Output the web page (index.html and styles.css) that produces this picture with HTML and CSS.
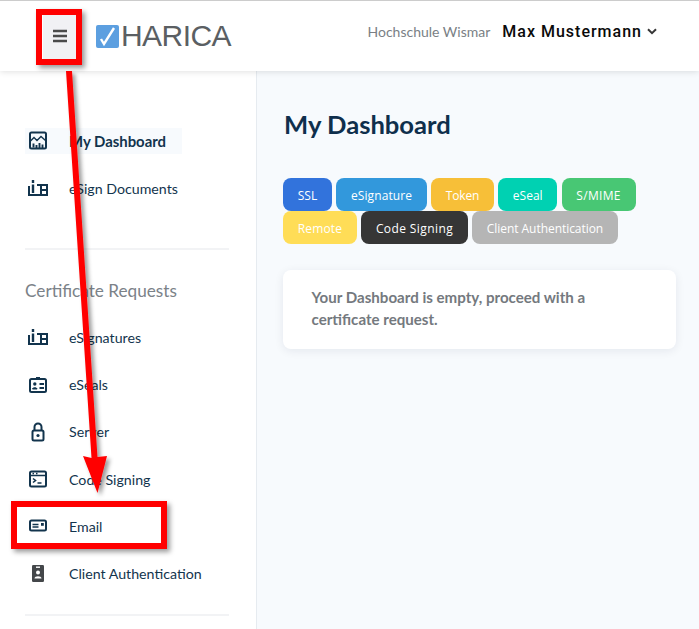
FILE: index.html
```html
<!DOCTYPE html>
<html lang="en">
<head>
<meta charset="utf-8">
<title>HARICA</title>
<link rel="stylesheet" href="styles.css">
</head>
<body>
<header class="topbar">
  <div class="brand">
    <button class="burger" aria-label="Menu">
      <svg width="16" height="14" viewBox="0 0 16 14"><path d="M1 2h14M1 7h14M1 12h14" stroke="#4a4a4a" stroke-width="2.4" fill="none"/></svg>
    </button>
    <div class="logo">
      <svg class="logo-mark" width="23" height="23" viewBox="0 0 23 23"><rect width="23" height="23" rx="2" fill="#5c9fe0"/><path d="M5 14l3 5L18 3" stroke="#fff" stroke-width="2.4" fill="none"/></svg>
      <span class="logo-text">HARICA</span>
    </div>
  </div>
  <div class="account">
    <span class="org">Hochschule Wismar</span>
    <span class="user">Max Mustermann</span>
    <svg width="10" height="7" viewBox="0 0 10 7"><path d="M1 1.200l4 4 4-4" stroke="#363636" stroke-width="2" fill="none"/></svg>
  </div>
</header>
<div class="layout">
  <aside class="sidebar">
    <nav class="group first">
      <a class="item active">
        <svg class="ico" viewBox="0 0 20 20"><rect x="2" y="1.500" width="16" height="16" rx="1.500" fill="none" stroke="#12344d" stroke-width="2"/><path d="M2.500 10l3.500-3.500 3 3 4-4 4.500 4" fill="none" stroke="#12344d" stroke-width="1.400"/><path d="M5.500 12.500v4M8.500 14v3M11.500 12v5M14.500 13.500v3.500" stroke="#12344d" stroke-width="1.900"/></svg>
        <span>My Dashboard</span>
      </a>
      <a class="item">
        <svg class="ico" viewBox="0 0 20 20"><path d="M1 8v9h18V7H9" fill="none" stroke="#12344d" stroke-width="2"/><path d="M5 2v3M5 6.500V15" stroke="#12344d" stroke-width="2.400"/><path d="M13 7v10M13 12h6" stroke="#12344d" stroke-width="2"/></svg>
        <span>eSign Documents</span>
      </a>
    </nav>
    <hr class="rule">
    <nav class="group">
      <h2 class="heading">Certificate Requests</h2>
      <a class="item">
        <svg class="ico" viewBox="0 0 20 20"><path d="M1 8v9h18V7H9" fill="none" stroke="#12344d" stroke-width="2"/><path d="M5 2v3M5 6.500V15" stroke="#12344d" stroke-width="2.400"/><path d="M13 7v10M13 12h6" stroke="#12344d" stroke-width="2"/></svg>
        <span>eSignatures</span>
      </a>
      <a class="item">
        <svg class="ico" viewBox="0 0 20 20"><rect x="2" y="4" width="16" height="13" rx="1.500" fill="none" stroke="#12344d" stroke-width="2"/><path d="M8 3.500h4" stroke="#12344d" stroke-width="3"/><circle cx="6.800" cy="9" r="1.700" fill="#12344d"/><path d="M4.500 14c0-1.700 4.600-1.700 4.600 0z" fill="#12344d" stroke="#12344d"/><path d="M11.500 9h4.500M11.500 13h4.500" stroke="#12344d" stroke-width="1.800"/></svg>
        <span>eSeals</span>
      </a>
      <a class="item">
        <svg class="ico" viewBox="0 0 20 20"><rect x="4.500" y="8.500" width="11" height="10" rx="1.500" fill="none" stroke="#12344d" stroke-width="2"/><path d="M6.500 8V5a3.500 3.500 0 0 1 7 0v3" fill="none" stroke="#12344d" stroke-width="2"/><circle cx="10" cy="13.500" r="1.600" fill="#12344d"/></svg>
        <span>Server</span>
      </a>
      <a class="item">
        <svg class="ico" viewBox="0 0 20 20"><rect x="2" y="2.500" width="16" height="15" rx="1.500" fill="none" stroke="#12344d" stroke-width="2"/><path d="M2 6.500h16M4.500 4.400h1.500M8 4.400h1.500" stroke="#12344d" stroke-width="1.500"/><path d="M5 9.500l2.500 2-2.500 2M9.500 14h4" fill="none" stroke="#12344d" stroke-width="1.600"/></svg>
        <span>Code Signing</span>
      </a>
      <a class="item">
        <svg class="ico" viewBox="0 0 20 20"><rect x="2" y="4.500" width="16" height="10" rx="1.500" fill="none" stroke="#12344d" stroke-width="2"/><path d="M4.500 8.500h6M4.500 11h6" stroke="#12344d" stroke-width="1.400"/><rect x="13" y="7" width="2.800" height="2.800" fill="#12344d"/></svg>
        <span>Email</span>
      </a>
      <a class="item">
        <svg class="ico" viewBox="0 0 20 20"><rect x="4" y="1" width="12" height="17" rx="1.200" fill="#44474a"/><rect x="8" y="2.500" width="4" height="1.400" fill="#fff"/><circle cx="10" cy="8.500" r="2" fill="#fff"/><path d="M6.500 14.500c0-3 7-3 7 0z" fill="#fff"/></svg>
        <span>Client Authentication</span>
      </a>
    </nav>
    <hr class="rule">
  </aside>
  <main class="content">
    <h1 class="title">My Dashboard</h1>
    <div class="tags">
      <span class="tag ssl">SSL</span>
      <span class="tag esig">eSignature</span>
      <span class="tag token">Token</span>
      <span class="tag eseal">eSeal</span>
      <span class="tag smime">S/MIME</span>
      <span class="tag remote">Remote</span>
      <span class="tag code">Code Signing</span>
      <span class="tag client">Client Authentication</span>
    </div>
    <section class="card">Your Dashboard is empty, proceed with a certificate request.</section>
  </main>
</div>
<div class="mark mark-burger"></div>
<div class="mark mark-email"></div>
<svg class="arrow" width="699" height="629" viewBox="0 0 699 629">
  <defs><filter id="s" x="-20%" y="-20%" width="140%" height="140%"><feDropShadow dx="3" dy="3" stdDeviation="2" flood-color="#000" flood-opacity=".4"/></filter></defs>
  <path d="M66 71L91.500 458L83 456L97.500 493L107 456L97.500 457L72 71z" fill="#f00" filter="url(#s)"/>
</svg>
</body>
</html>
```
FILE: styles.css
```css
* { box-sizing: border-box; }
html, body { margin: 0; height: 100%; overflow: hidden; }
body { font-family: "Lato", sans-serif; background: #f7fafd; color: #12344d; border-top: 1px solid #ccc; height: 629px; position: relative; }
.topbar { height: 70px; background: #fff; display: flex; align-items: center; justify-content: space-between; box-shadow: 0 1px 6px rgba(0,0,0,.12); position: relative; padding: 0 42px 0 43px; }
.brand { display: flex; align-items: center; gap: 20px; }
.burger { width: 33px; height: 48px; background: #f1f1f4; border: 0; padding: 0; display: flex; align-items: center; justify-content: center; }
.logo { display: flex; align-items: center; gap: 2px; }
.logo-mark { display: block; }
.logo-text { font-family: "Liberation Sans", sans-serif; font-size: 30px; letter-spacing: -.55px; color: #5b5f63; line-height: 1; }
.account { display: flex; align-items: center; margin-bottom: 9px; }
.org { font-size: 14px; color: #7a7f85; margin-right: 12px; }
.user { font-family: "Roboto", sans-serif; font-size: 16px; font-weight: 500; color: #0a0a0a; letter-spacing: 1px; margin-right: 5px; }
.layout { display: flex; height: 558px; }
.sidebar { width: 257px; background: #fff; border-right: 1px solid #e6ebf0; padding: 0 27px 0 25px; flex: none; }
.group.first { padding-top: 57px; }
.item { display: flex; align-items: center; height: 26px; margin-bottom: 21.300px; font-size: 14.200px; color: #12344d; position: relative; }
.item span { margin-left: 21px; }
.ico { width: 20px; height: 20px; margin-left: 3px; flex: none; }
.active { background: #f7fafd; width: 157px; font-size: 14.900px; font-weight: 700; }
.rule { border: 0; border-top: 2px solid #f2f3f5; margin: 0; }
.group.first + .rule { margin-top: 47px; }
.heading { font-size: 17.200px; font-weight: 400; color: #7b8288; margin: 30px 0 22px; line-height: 22px; }
.group:not(.first) + .rule { margin-top: 27px; }
.content { flex: 1; padding: 36px 23px 0 26px; }
.title { font-size: 25.600px; font-weight: 700; color: #0f2f4c; margin: 0 0 37px 1px; line-height: 34px; }
.tags { display: flex; flex-wrap: wrap; column-gap: 4.250px; }
.tag { font-family: "Open Sans", sans-serif; font-size: 12px; color: #fff; height: 33px; padding: 1px 14.750px 0; border-radius: 8px; display: flex; align-items: center; }
.ssl { background: #3273dc; }
.esig { background: #3298dc; letter-spacing: .1px; }
.token { background: #f7bf38; letter-spacing: -.2px; }
.eseal { background: #00d1b2; }
.smime { background: #48c774; letter-spacing: .3px; }
.remote { background: #ffdd57; letter-spacing: .15px; }
.code { background: #363636; letter-spacing: .4px; }
.client { background: #b5b5b5; letter-spacing: -.05px; }
.card { margin-top: 26px; background: #fff; border-radius: 8px; box-shadow: 0 2px 10px rgba(10,30,60,.08); padding: 17px 80px 0 28.500px; font-size: 15.100px; font-weight: 700; color: #74797e; line-height: 21.600px; height: 79px; }
.mark { position: absolute; border: 6px solid #f00; box-shadow: 3px 3px 5px rgba(0,0,0,.4); }
.mark-burger { left: 36px; top: 8px; width: 46px; height: 56px; }
.mark-email { left: 11px; top: 500px; width: 156px; height: 48px; }
.arrow { position: absolute; left: 0; top: -1px; pointer-events: none; }
```
